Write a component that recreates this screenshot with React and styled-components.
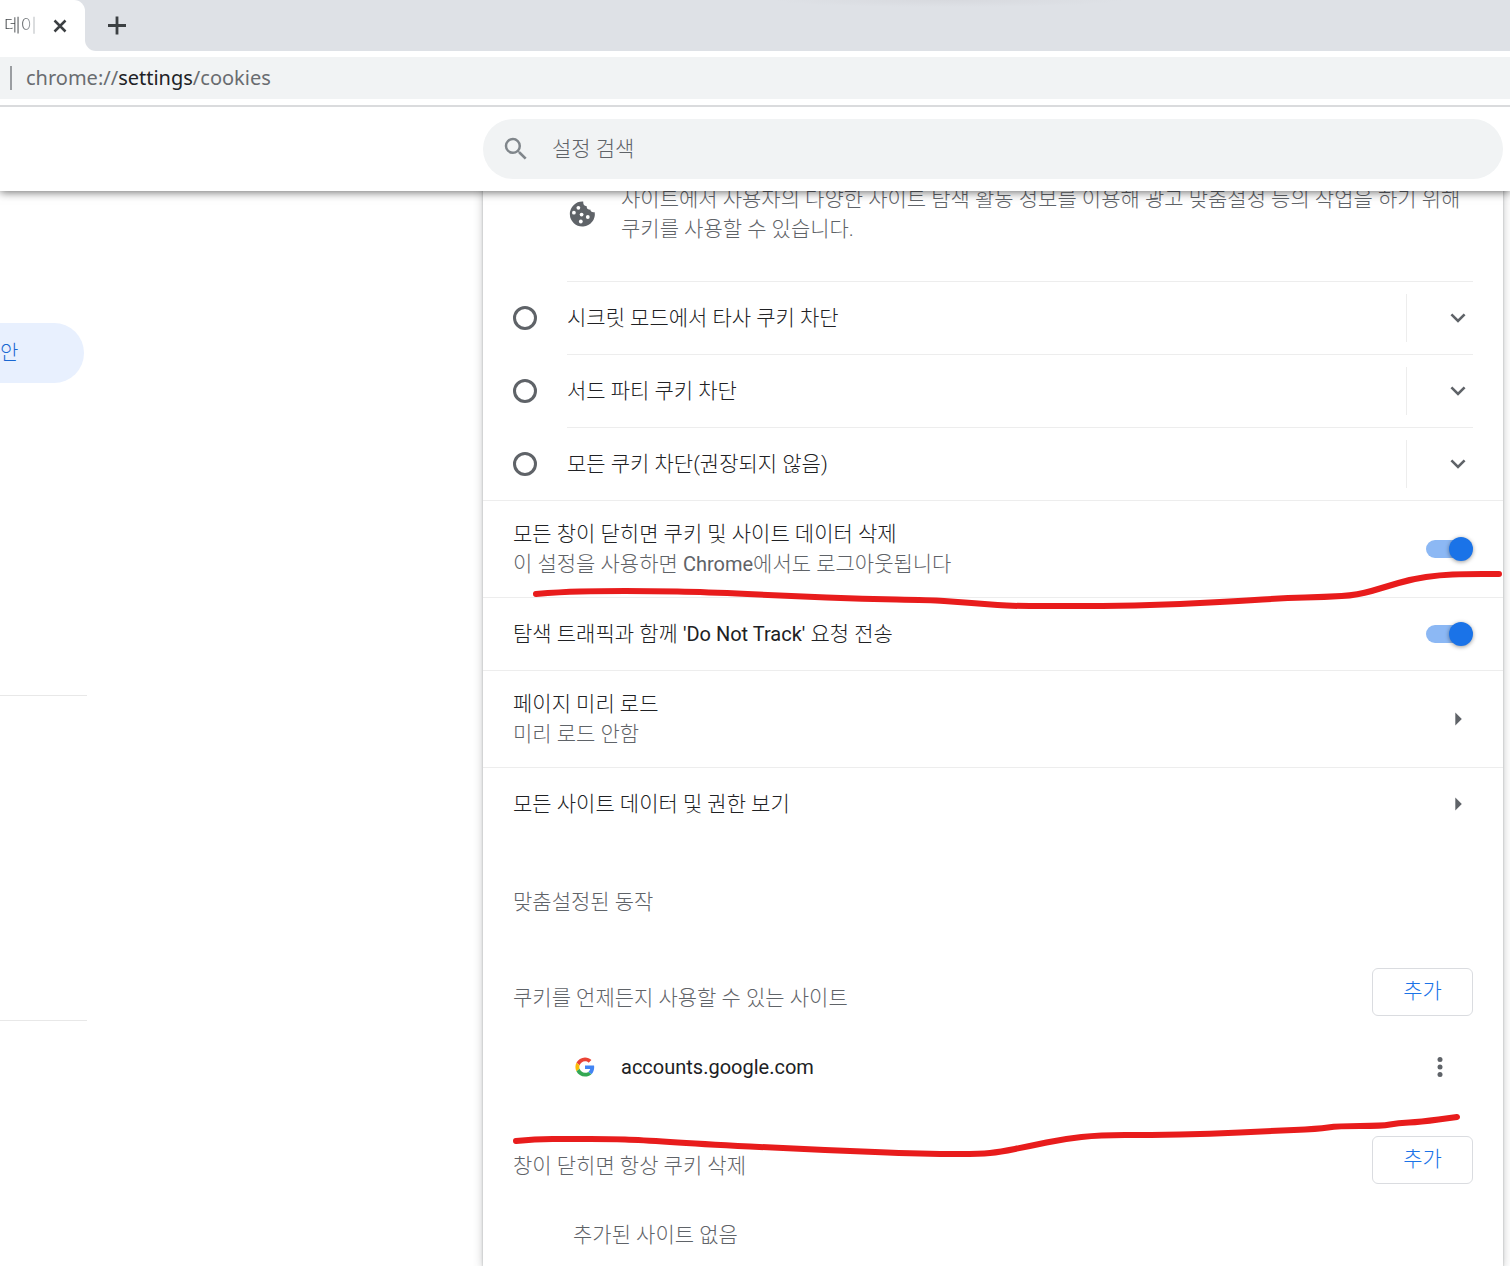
import React from "react";
import styled, { createGlobalStyle } from "styled-components";

const INK = "#202124";
const GREY = "#5f6368";
const BLUE = "#1a73e8";
const LINE = "#ededed";

const GlobalStyle = createGlobalStyle`
  * { box-sizing: border-box; }
  body {
    margin: 0;
    background: #fff;
    color: ${INK};
    font: 300 21px/30px Roboto, "Noto Sans CJK KR", sans-serif;
    word-break: keep-all;
  }
  button, input { font: inherit; color: inherit; }
  p, h2, h3 { margin: 0; font: inherit; }
  svg { flex: none; display: block; }
`;

const Page = styled.div`
  height: 100vh;
  display: flex;
  flex-direction: column;
  overflow: hidden;
`;

const TabStrip = styled.div`
  display: flex;
  flex: none;
  height: 51px;
  background: #dee1e6;
`;

const Tab = styled.div`
  display: flex;
  align-items: center;
  gap: 10px;
  width: 85px;
  padding-left: 4px;
  background: #fff;
  border-radius: 0 11px 0 0;
`;

const TabTitle = styled.span`
  width: 36px;
  overflow: hidden;
  white-space: nowrap;
  font-size: 18px;
  background: linear-gradient(90deg, #3c4043 40%, #dfe3e8 100%);
  background-clip: text;
  color: transparent;
`;

const IconButton = styled.button`
  display: flex;
  align-items: center;
  justify-content: center;
  flex: none;
  width: ${(p) => p.$size || 30}px;
  height: ${(p) => p.$size || 30}px;
  padding: 0;
  border: 0;
  background: none;
  color: ${GREY};
`;

const StripBack = styled.div`
  display: flex;
  flex: 1;
  background: #fff;
`;

const Strip = styled.div`
  display: flex;
  align-items: center;
  flex: 1;
  padding-left: 17px;
  background: radial-gradient(closest-side, #d7d9de, #dee1e6) 64% -7px / 350px 14px no-repeat #dee1e6;
  border-radius: 0 0 0 11px;
`;

const AddressBar = styled.div`
  position: relative;
  z-index: 3;
  display: flex;
  align-items: center;
  flex: none;
  height: 56px;
  padding: 6px 0;
  border-bottom: 2px solid #dadbdd;
  background: #fff;
`;

const Address = styled.div`
  display: flex;
  align-items: center;
  flex: 1;
  height: 42px;
  padding-left: 10px;
  gap: 14px;
  background: #f1f3f4;
  color: #696c70;
  font: 400 20px/30px "Noto Sans", "Open Sans", sans-serif;

  &::before {
    content: "";
    width: 2px;
    height: 24px;
    background: #9a9da1;
  }

  b {
    font-weight: 400;
    color: ${INK};
  }
`;

const Header = styled.header`
  position: relative;
  z-index: 2;
  flex: none;
  padding: 12px 7px 12px 483px;
  background: #fff;
  box-shadow: 0 1px 9px rgba(0, 0, 0, 0.6);
`;

const SearchBox = styled.label`
  display: flex;
  align-items: center;
  gap: 21px;
  height: 60px;
  padding: 0 18px;
  border-radius: 30px;
  background: #f1f3f4;
`;

const SearchInput = styled.input`
  flex: 1;
  min-width: 0;
  padding: 0;
  border: 0;
  outline: 0;
  background: none;

  &::placeholder {
    color: ${GREY};
    opacity: 1;
  }
`;

const Body = styled.div`
  display: flex;
  flex: 1;
  min-height: 0;
  padding-right: 7px;
`;

const Sidebar = styled.nav`
  flex: none;
  width: 483px;
  padding-top: 132px;
`;

const SideLink = styled.a`
  display: flex;
  align-items: center;
  width: 84px;
  height: 60px;
  border-radius: 0 30px 30px 0;
  background: #e8f0fe;
  color: #1967d2;
  font-size: 20px;
  text-decoration: none;
`;

const SideRule = styled.hr`
  width: 87px;
  height: 1px;
  margin: ${(p) => p.$space}px 0 0;
  border: 0;
  background: #e8e8e8;
`;

const Card = styled.main`
  position: relative;
  flex: 1;
  min-width: 0;
  margin-top: -8px;
  background: #fff;
  box-shadow: 0 1px 2px rgba(60, 64, 67, 0.3), 0 2px 9px rgba(60, 64, 67, 0.3);
`;

const CookieNote = styled.div`
  display: flex;
  align-items: center;
  gap: 24px;
  height: 98px;
  padding: 0 30px 36px 84px;
  color: ${GREY};
`;

const OptionRow = styled.div`
  display: flex;
  align-items: center;
  height: 73px;
  padding: 0 30px;
`;

const Radio = styled.input`
  appearance: none;
  flex: none;
  width: 24px;
  height: 24px;
  margin: 0 30px 0 0;
  border: 3px solid ${GREY};
  border-radius: 50%;
`;

const OptionBody = styled.div`
  display: flex;
  align-items: center;
  flex: 1;
  height: 100%;
  border-top: 1px solid ${LINE};

  label { flex: 1; }
`;

const Expander = styled.div`
  display: flex;
  align-items: center;
  height: 48px;
  padding-left: 36px;
  border-left: 1px solid ${LINE};
`;

const Row = styled.div`
  display: flex;
  align-items: center;
  justify-content: space-between;
  height: ${(p) => (p.$tall ? 97 : 73)}px;
  padding: 0 30px;
  border-top: 1px solid ${LINE};
`;

const Sub = styled.span`
  display: block;
  color: ${GREY};
`;

const Latin = styled.span`
  font-size: 20px;
  font-weight: 400;
`;

const Switch = styled.input`
  appearance: none;
  display: flex;
  align-items: center;
  flex: none;
  margin: 0;

  &::before {
    content: "";
    width: 42px;
    height: 18px;
    border-radius: 9px;
    background: #8cb8f4;
  }

  &::after {
    content: "";
    width: 24px;
    height: 24px;
    margin-left: -19px;
    border-radius: 50%;
    background: ${BLUE};
    box-shadow: 0 1px 4px rgba(0, 0, 0, 0.4);
  }
`;

const SectionTitle = styled.h2`
  padding: 47px 30px 39px;
  color: ${GREY};
`;

const SiteGroup = styled.section`
  padding-bottom: 18px;
`;

const SiteHeader = styled.div`
  display: flex;
  align-items: center;
  justify-content: space-between;
  height: 72px;
  padding: 0 30px;
  color: ${GREY};

  h3 { padding-top: 12px; }
`;

const AddButton = styled.button`
  width: 101px;
  height: 48px;
  padding: 0 0 2px;
  border: 1px solid #dadce0;
  border-radius: 6px;
  background: #fff;
  color: ${BLUE};
`;

const SiteRow = styled.div`
  display: flex;
  align-items: center;
  height: 78px;
  padding: 0 48px 0 92px;
  gap: 26px;

  ${Latin} { flex: 1; }
`;

const Empty = styled.p`
  padding: 24px 90px;
  color: ${GREY};
`;

const Marks = styled.svg`
  position: absolute;
  top: 0;
  left: 0;
  overflow: visible;
  pointer-events: none;
`;

const options = ["시크릿 모드에서 타사 쿠키 차단", "서드 파티 쿠키 차단", "모든 쿠키 차단(권장되지 않음)"];

const penStrokes = [
  [[536, 594], [560, 592], [600, 591], [650, 591], [705, 592], [790, 596], [863, 599], [930, 600], [958, 602], [985, 604], [1010, 606], [1050, 606], [1120, 606], [1180, 604], [1240, 601], [1285, 598], [1325, 597], [1358, 595], [1385, 587], [1412, 579], [1440, 575], [1465, 574], [1499, 574]],
  [[516, 1141], [535, 1139], [570, 1139], [610, 1139], [640, 1140], [700, 1144], [800, 1149], [850, 1151], [900, 1153], [940, 1154], [980, 1154], [1000, 1152], [1030, 1146], [1063, 1139], [1100, 1135], [1150, 1135], [1210, 1134], [1270, 1131], [1318, 1129], [1338, 1126], [1382, 1126], [1398, 1123], [1420, 1122], [1457, 1117]],
];

// Runs a curve through the middle of each pair of points.
function smooth(points) {
  const last = points[points.length - 1];
  let d = `M${points[0]}`;
  for (let i = 1; i < points.length - 1; i++) {
    const [x, y] = points[i];
    const [nx, ny] = points[i + 1];
    d += ` Q${x} ${y} ${(x + nx) / 2} ${(y + ny) / 2}`;
  }
  return `${d} L${last}`;
}

const Chevron = () => (
  <svg width="30" height="30" viewBox="0 0 30 30" fill="none" stroke="currentColor" strokeWidth="2.6">
    <path d="M8.4 11.4 15 18l6.600-6.600" />
  </svg>
);

const Arrow = () => (
  <svg width="30" height="30" viewBox="0 0 30 30" fill="currentColor">
    <path d="M12.300 8.500 18.800 15 12.300 21.500z" />
  </svg>
);

const CookieIcon = () => (
  <svg width="30" height="30" viewBox="0 0 30 30" aria-hidden="true">
    <path
      fill={GREY}
      d="M16.200 2.600A12.500 12.500 0 1 0 27.700 13.200C24.700 13.600 23.700 12.600 23.300 10.600C20.700 10.900 19.600 9.500 19.700 7.300C17.100 7.200 16.100 5.500 16.200 2.600z"
    />
    <g fill="#fff">
      <circle cx="11.400" cy="8.800" r="1.900" />
      <circle cx="6.900" cy="13.700" r="1.900" />
      <circle cx="14.600" cy="15.600" r="1.900" />
      <circle cx="20.800" cy="18" r="1.900" />
      <circle cx="13.800" cy="22.500" r="1.900" />
    </g>
  </svg>
);

const GoogleIcon = () => (
  <svg width="20" height="20" viewBox="-1 -1 50 50" aria-hidden="true">
    <path fill="#EA4335" d="M24 9.500c3.540 0 6.710 1.220 9.210 3.600l6.850-6.850C35.900 2.380 30.470 0 24 0 14.620 0 6.510 5.380 2.560 13.220l7.980 6.190C12.430 13.720 17.740 9.500 24 9.500z" />
    <path fill="#4285F4" d="M46.980 24.550c0-1.570-.15-3.090-.38-4.550H24v9.020h12.940c-.58 2.960-2.260 5.480-4.780 7.180l7.730 6c4.510-4.180 7.090-10.360 7.090-17.650z" />
    <path fill="#FBBC05" d="M10.530 28.590c-.48-1.450-.76-2.990-.76-4.590s.27-3.140.76-4.590l-7.980-6.190C.92 16.460 0 20.120 0 24c0 3.880.92 7.540 2.560 10.780l7.970-6.190z" />
    <path fill="#34A853" d="M24 48c6.480 0 11.930-2.130 15.890-5.810l-7.730-6c-2.150 1.450-4.920 2.300-8.160 2.300-6.260 0-11.570-4.220-13.470-9.910l-7.980 6.190C6.510 42.620 14.620 48 24 48z" />
  </svg>
);

export default function App() {
  return (
    <Page>
      <GlobalStyle />
      <TabStrip>
        <Tab>
          <TabTitle>데이</TabTitle>
          <IconButton $size={20} aria-label="탭 닫기">
            <svg width="20" height="20" viewBox="0 0 20 20" stroke="#3c4043" strokeWidth="2.5">
              <path d="M4.500 4.500l11 11M15.500 4.500l-11 11" />
            </svg>
          </IconButton>
        </Tab>
        <StripBack>
          <Strip>
            <IconButton aria-label="새 탭">
              <svg width="30" height="30" viewBox="0 0 30 30" stroke="#3c4043" strokeWidth="2.8">
                <path d="M6 14.500h18M15 5.500v18" />
              </svg>
            </IconButton>
          </Strip>
        </StripBack>
      </TabStrip>
      <AddressBar>
        <Address>
          <span>chrome://<b>settings</b>/cookies</span>
        </Address>
      </AddressBar>
      <Header>
        <SearchBox>
          <svg width="30" height="30" viewBox="0 0 24 24" fill="#80868b" aria-hidden="true">
            <path d="M15.500 14h-.79l-.28-.27A6.471 6.471 0 0 0 16 9.500 6.500 6.500 0 1 0 9.500 16c1.610 0 3.090-.59 4.230-1.570l.27.28v.79l5 4.990L20.490 19l-4.990-5zm-6 0C7.010 14 5 11.990 5 9.500S7.010 5 9.500 5 14 7.010 14 9.500 11.990 14 9.500 14z" />
          </svg>
          <SearchInput type="text" placeholder="설정 검색" aria-label="설정 검색" />
        </SearchBox>
      </Header>
      <Body>
        <Sidebar>
          <SideLink href="#privacy">안</SideLink>
          <SideRule $space={312} />
          <SideRule $space={324} />
        </Sidebar>
        <Card>
          <CookieNote>
            <CookieIcon />
            <p>사이트에서 사용자의 다양한 사이트 탐색 활동 정보를 이용해 광고 맞춤설정 등의 작업을 하기 위해 쿠키를 사용할 수 있습니다.</p>
          </CookieNote>
          {options.map((text, i) => (
            <OptionRow key={text}>
              <Radio type="radio" name="cookies" id={`option-${i}`} />
              <OptionBody>
                <label htmlFor={`option-${i}`}>{text}</label>
                <Expander>
                  <IconButton aria-label="펼치기"><Chevron /></IconButton>
                </Expander>
              </OptionBody>
            </OptionRow>
          ))}
          <Row $tall>
            <label htmlFor="clear">
              모든 창이 닫히면 쿠키 및 사이트 데이터 삭제
              <Sub>이 설정을 사용하면 <Latin>Chrome</Latin>에서도 로그아웃됩니다</Sub>
            </label>
            <Switch type="checkbox" id="clear" defaultChecked />
          </Row>
          <Row>
            <label htmlFor="dnt">
              탐색 트래픽과 함께 <Latin>'Do Not Track'</Latin> 요청 전송
            </label>
            <Switch type="checkbox" id="dnt" defaultChecked />
          </Row>
          <Row $tall>
            <div>
              페이지 미리 로드
              <Sub>미리 로드 안함</Sub>
            </div>
            <IconButton aria-label="페이지 미리 로드"><Arrow /></IconButton>
          </Row>
          <Row>
            <div>모든 사이트 데이터 및 권한 보기</div>
            <IconButton aria-label="모든 사이트 데이터 및 권한 보기"><Arrow /></IconButton>
          </Row>
          <SectionTitle>맞춤설정된 동작</SectionTitle>
          <SiteGroup>
            <SiteHeader>
              <h3>쿠키를 언제든지 사용할 수 있는 사이트</h3>
              <AddButton>추가</AddButton>
            </SiteHeader>
            <SiteRow>
              <GoogleIcon />
              <Latin>accounts.google.com</Latin>
              <IconButton aria-label="추가 작업">
                <svg width="30" height="30" viewBox="0 0 30 30" fill="currentColor">
                  <circle cx="15" cy="7.500" r="2.500" />
                  <circle cx="15" cy="15" r="2.500" />
                  <circle cx="15" cy="22.500" r="2.500" />
                </svg>
              </IconButton>
            </SiteRow>
          </SiteGroup>
          <SiteGroup>
            <SiteHeader>
              <h3>창이 닫히면 항상 쿠키 삭제</h3>
              <AddButton>추가</AddButton>
            </SiteHeader>
            <Empty>추가된 사이트 없음</Empty>
          </SiteGroup>
          <Marks width="1020" height="1083" viewBox="483 183 1020 1083" aria-hidden="true">
            <g fill="none" stroke="#e81c1c" strokeWidth="6" strokeLinecap="round" strokeLinejoin="round">
              {penStrokes.map((points, i) => (
                <path key={i} d={smooth(points)} />
              ))}
            </g>
          </Marks>
        </Card>
      </Body>
    </Page>
  );
}
